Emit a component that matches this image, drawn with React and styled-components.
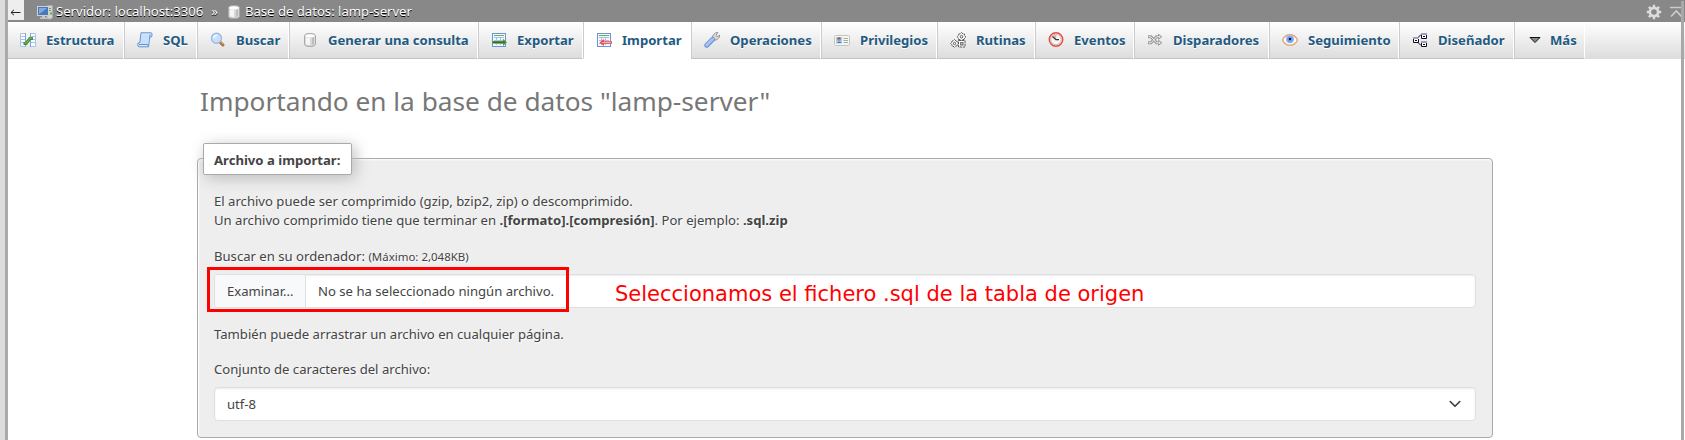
import React from "react";
import styled, { createGlobalStyle, css } from "styled-components";

const GlobalStyle = createGlobalStyle`
  * { box-sizing: border-box; }
  html, body { margin: 0; height: 100%; overflow: hidden; }
  body {
    background: #fff;
    color: #444;
    font-family: "Noto Sans", "Open Sans", sans-serif;
    font-size: 13.12px;
    line-height: 19.68px;
  }
`;

const Shell = styled.div`
  display: flex;
  width: 1685px;
  height: 440px;
  overflow: hidden;
`;

const NavigationEdge = styled.div`
  flex: none;
  width: 8px;
  background: #dcdddf;
  border-right: 3px solid #aaa;
`;

const Main = styled.main`
  flex: 1;
  min-width: 0;
`;

const ScrollBar = styled.div`
  position: absolute;
  top: 1px;
  left: 1681px;
  width: 3px;
  height: 439px;
  background: #a8a8a8;
`;

const ServerBar = styled.header`
  display: flex;
  align-items: center;
  height: 22px;
  background: #888;
  color: #fff;
  text-shadow: 0 1px 0 #000;
`;

const BackButton = styled.div`
  display: flex;
  align-items: center;
  align-self: flex-start;
  width: 16px;
  height: 20px;
  padding: 4px 0 0 2px;
  background: #eee;
`;

const Crumb = styled.span`
  display: flex;
  align-items: center;
  height: 22px;
  padding-top: 2px;
  margin-left: ${(p) => p.$gap}px;
  white-space: pre;
`;

const CrumbText = styled.span`
  padding-bottom: 1px;
  margin-left: ${(p) => p.$gap || 0}px;
`;

const BarTools = styled.div`
  display: flex;
  align-items: center;
  gap: 8px;
  margin: 1px 3px 0 auto;
`;

const TabBar = styled.nav`
  display: flex;
  height: 37px;
  background: linear-gradient(#fff, #dcdcdc);
`;

const Tab = styled.a`
  display: flex;
  flex: none;
  align-items: center;
  gap: ${(p) => p.$gap}px;
  width: ${(p) => p.$width}px;
  height: 37px;
  padding: 0 0 0 12px;
  border-left: 1px solid #ccc;
  border-right: 1px solid #fff;
  border-bottom: 1px solid #c4c4c4;
  color: #235a81;
  font-weight: 700;
  white-space: nowrap;
  text-shadow: 0 1px 0 #fff;

  &:first-child { border-left: 0; }

  ${(p) =>
    p.$active &&
    css`
      background: #fff;
      border-bottom-color: #fff;
    `}
`;

const TabText = styled.span`
  padding-top: 1px;
`;

const Content = styled.section`
  width: 1296px;
  margin-left: 189px;
`;

const Title = styled.h2`
  margin: 22px 0 0 3px;
  color: #777;
  font-size: 26.24px;
  font-weight: 400;
  line-height: 40px;
`;

const Panel = styled.div`
  height: 280px;
  margin-top: 37px;
  padding: 0 16px;
  background: #eee;
  border: 1px solid #aaa;
  border-radius: 4px;
  box-shadow: 1px 1px 2px #fff inset;
  text-shadow: 1px 1px 2px #fff;
`;

const Legend = styled.div`
  width: 149px;
  height: 32px;
  margin: -16px 0 16.8px -11px;
  padding: 7px 10px 5px;
  background: #fff;
  border: 1px solid #aaa;
  border-radius: 2px;
  box-shadow: 3px 3px 15px #bbb;
  font-weight: 700;
  line-height: 19px;
  white-space: nowrap;
`;

const Paragraph = styled.p`
  margin: 0 0 16px;
`;

const Label = styled.div`
  height: 19.68px;
  margin-bottom: 7.2px;

  small { font-size: 11.48px; }
`;

const Control = styled.div`
  display: flex;
  align-items: center;
  height: 33.68px;
  margin-bottom: ${(p) => p.$gap || 0}px;
  background: #fff;
  border: 1px solid #dcdfe4;
  border-radius: 4px;
  box-shadow: inset 0 1px 2px rgba(0, 0, 0, 0.075);
  text-shadow: none;
`;

const BrowseButton = styled.span`
  display: flex;
  align-items: center;
  width: 91px;
  height: 100%;
  padding: 1px 0 0 12px;
  background: #f8f9fa;
  border-right: 1px solid #dcdfe4;
  border-radius: 3px 0 0 3px;
`;

const FileName = styled.span`
  padding: 1px 0 0 12px;
`;

const SelectValue = styled.span`
  flex: 1;
  padding: 1px 0 0 12px;
`;

const Chevron = styled.svg`
  margin-right: 14px;
`;

const Highlight = styled.div`
  position: absolute;
  top: 267px;
  left: 207px;
  width: 362px;
  height: 45px;
  border: 3px solid #f00;
`;

const Note = styled.div`
  position: absolute;
  top: 281px;
  left: 615px;
  color: #f00;
  font: 21px/26px "DejaVu Sans", sans-serif;
  white-space: nowrap;
`;

const IconSvg = styled.svg`
  flex: none;
  width: 16px;
  height: 16px;
`;

const Icon = ({ children }) => (
  <IconSvg viewBox="0 0 16 16" fill="none">
    {children}
  </IconSvg>
);

const Cylinder = () => (
  <>
    <path d="M2.5 3.5Q2.5 1.5 8 1.5T13.5 3.5V12.5Q13.5 14.5 8 14.5T2.5 12.5Z" fill="#d9d9d9" stroke="#aaa" />
    <path d="M4 5.5V12Q6 13.2 8 13V6Z" fill="#f6f6f6" />
    <path d="M10 6V13L12 12V5Z" fill="#bdbdbd" />
    <ellipse cx="8" cy="3.8" rx="4.6" ry="1.6" fill="#fff" />
  </>
);

const Sheet = () => (
  <>
    <rect x="1.5" y="1.5" width="13" height="13" fill="#f4f8ff" stroke="#6c94d2" />
    <path d="M3 3.5H13" stroke="#76a95a" />
    <path d="M3 5.5H13M3 8.5H13M3 11.5H13M5.5 5V13M9.5 5V13" stroke="#a9bfe5" />
  </>
);

const icons = {
  server: (
    <>
      <path d="M9.5 2.5L11 1.5H15.5V13.5L14 15H10Z" fill="#d4d4cd" stroke="#aaa" />
      <path d="M11 4.5H14M11 6.5H14" stroke="#888" />
      <path d="M13 9.5H15" stroke="#4fc02c" strokeWidth="2" />
      <rect x=".5" y="2.5" width="11" height="9" fill="#4a78bd" stroke="#d2d2cd" />
      <path d="M2 4H10L6 7.5L2 10Z" fill="#82a9dc" />
      <path d="M5 12H8V13.5H10V15H3V13.5H5Z" fill="#c7c7bf" />
    </>
  ),
  structure: (
    <>
      <path d="M.5 1.5H5.5V14.5H.5ZM10.5 1.5H15.5V14.5H10.5Z" fill="#f8fbff" stroke="#a9c3e7" />
      <path d="M1 4.5H5M1 7.5H5M1 10.5H5M11 4.5H15M11 7.5H15M11 10.5H15" stroke="#a9c3e7" />
      <path d="M5.5 1V15M10.5 1V15" stroke="#87a4ce" />
      <path d="M3.5 11.5H6L10 6.5H13" stroke="#3f8c39" strokeWidth="3" />
      <path d="M4.5 11H6.5L10.3 6H12.5" stroke="#77c365" />
    </>
  ),
  sql: (
    <>
      <path d="M4 .8H14Q15.5 1 15 3L14.5 5H12.7L11.5 14.8H2Q.5 14.5 .8 12.5L1 11H2.8Z" fill="#dbeaff" stroke="#6190cf" />
      <path d="M4.5 2.5H12L11 12H3.8Z" fill="#c7dfff" />
      <path d="M2 12.5H10.5L11.5 14.5" stroke="#6190cf" />
      <path d="M12.7 4.5L13 2.5" stroke="#5585c8" />
    </>
  ),
  search: (
    <>
      <path d="M10 10L13 13" stroke="#a96d35" strokeWidth="3" strokeLinecap="round" />
      <path d="M10.5 9.8L13.4 12.6" stroke="#edb774" />
      <circle cx="6.5" cy="6.2" r="5" fill="#c9e0fa" stroke="#9ab9e2" strokeWidth="1.4" />
      <path d="M3.5 6Q4 3.5 7 3.2" stroke="#f5faff" strokeWidth="1.5" />
    </>
  ),
  database: <Cylinder />,
  export: (
    <>
      <Sheet />
      <path d="M1 9H12V6.8L16 10.3L12 14V11.5H1Z" fill="#4c9e35" />
      <path d="M2 10.3H14" stroke="#226b1c" />
    </>
  ),
  import: (
    <>
      <Sheet />
      <path d="M16 9.3H8V7L3.5 10.5L8 14V11.7H16Z" fill="#f04a4a" />
      <path d="M6 10.5H15" stroke="#ffaaa8" />
    </>
  ),
  wrench: (
    <>
      <path d="M9 7.5L8.5 4L11.5.7L14 .5L12 3.2L13 4.8L15.5 3V5L13 7.8L10 8.2Z" fill="#d8d8d8" stroke="#888" strokeWidth=".8" />
      <path d="M2.8 13.2L8.5 7.5" stroke="#6f93d2" strokeWidth="5" strokeLinecap="round" />
      <path d="M2.8 13L8.5 7.3" stroke="#a7c3f4" strokeWidth="3" strokeLinecap="round" />
    </>
  ),
  card: (
    <>
      <rect x=".5" y="3.5" width="15" height="10" rx="1" fill="#f6f6f3" stroke="#c5c5bf" />
      <rect x="2" y="5" width="6" height="6.5" fill="#a3ccf7" />
      <circle cx="5" cy="7.2" r="1.8" fill="#c18c62" />
      <path d="M3 11Q5 8.5 7.5 11" fill="#386fbd" />
      <path d="M3.5 6.2H6.5" stroke="#62462f" />
      <path d="M9.5 6.5H14M9.5 8.5H14M9.5 10.5H14" stroke="#aaa" />
    </>
  ),
  routines: (
    <>
      <path d="M11.5.5L13 2H14.5V3.5L15.8 5L14.5 6.3V7.5H12.8L11.5 8.7L10 7.5H8.5V6L7 4.8L8.5 3.3V2H10Z" fill="#fff" stroke="#555" strokeDasharray="2 .6" />
      <circle cx="11.5" cy="4.7" r="1.3" stroke="#555" />
      <path d="M4.5 7.5L6 9H7V10L8.4 11.5L7 12.8V14H5.8L4.4 15.4L3 14H2V12.7L.6 11.5L2 10V9H3Z" fill="#fff" stroke="#555" strokeDasharray="2 .6" />
      <circle cx="4.5" cy="11.5" r="1.2" stroke="#555" />
      <rect x="8.5" y="8.5" width="6.5" height="6.5" fill="#fff" stroke="#555" strokeDasharray="2.5 .7" />
      <rect x="10.7" y="10.7" width="2.3" height="2.3" stroke="#555" />
    </>
  ),
  clock: (
    <>
      <circle cx="8" cy="7.5" r="6.7" fill="#f5f5f1" stroke="#ed4848" strokeWidth="1.5" />
      <circle cx="8" cy="7.5" r="5.3" stroke="#bcbcb6" />
      <path d="M8 7.5L8.5 3H5Z" fill="#f4aaa5" />
      <path d="M4.5 4.5L8 7.7H11" stroke="#333" strokeWidth="1.3" />
    </>
  ),
  shuffle: (
    <>
      <path d="M1 4.8H4L9.5 10.8H12.5M1 10.8H4L9.5 4.8H12.5" stroke="#999" strokeWidth="3" />
      <path d="M11.5 2.3L14.8 4.8L11.5 7.3ZM11.5 8.3L14.8 10.8L11.5 13.3Z" fill="#d8d8d8" stroke="#999" />
      <path d="M1.8 4.8H4L9.5 10.8H13M1.8 10.8H4L9.5 4.8H13" stroke="#eee" />
    </>
  ),
  eye: (
    <>
      <path d="M.5 8Q3 2.7 8 2.7T15.5 8Q13 13.2 8 13.2T.5 8Z" fill="#fff" stroke="#e1aa80" strokeWidth="1.5" />
      <circle cx="8" cy="7.3" r="4" fill="#8fb2f0" />
      <circle cx="8" cy="7.3" r="2.5" fill="#6a92e2" />
      <rect x="7" y="6" width="2" height="2" fill="#101820" />
    </>
  ),
  designer: (
    <>
      <path d="M5.5 6L9 2.5M5.5 10L9 13.5" stroke="#111" />
      <path d="M1 6H6M9 2H15M9 10H15" stroke="#9c9cd2" strokeWidth="2" />
      <path d="M1.5 7V10.5H6.5V7M9.5 3V6.5H14.5V3M9.5 11V14.5H14.5V11" fill="#fff" stroke="#111" />
      <path d="M3 8.5H5M11 4.5H13M11 12.5H13" stroke="#111" />
    </>
  ),
  more: <path d="M3 5.5H13L8 10.5Z" fill="#888" stroke="#111" />,
  gear: (
    <>
      <path d="M8 .8V15.2M.8 8H15.2M2.9 2.9L13.1 13.1M13.1 2.9L2.9 13.1" stroke="#ddd" strokeWidth="2.4" />
      <circle cx="8" cy="8" r="4.1" fill="#888" stroke="#ddd" strokeWidth="2.6" />
    </>
  ),
};

const tabs = [
  ["structure", "Estructura", 116],
  ["sql", "SQL", 73],
  ["search", "Buscar", 92],
  ["database", "Generar una consulta", 189],
  ["export", "Exportar", 105],
  ["import", "Importar", 108],
  ["wrench", "Operaciones", 130],
  ["card", "Privilegios", 116],
  ["routines", "Rutinas", 98],
  ["clock", "Eventos", 99],
  ["shuffle", "Disparadores", 135],
  ["eye", "Seguimiento", 130],
  ["designer", "Diseñador", 115],
  ["more", "Más", 71],
];

export default function App() {
  return (
    <>
      <GlobalStyle />
      <Shell>
        <NavigationEdge />
        <Main>
          <ServerBar>
            <BackButton>
              <svg width="11" height="9" viewBox="0 0 11 9" fill="none">
                <path d="M10.5 4.5H1M4 1.8L1 4.5L4 7.2" stroke="#222" />
              </svg>
            </BackButton>
            <Crumb $gap={13}>
              <Icon>{icons.server}</Icon>
              <CrumbText $gap={3}>Servidor: localhost:3306</CrumbText>
            </Crumb>
            <Crumb $gap={8}>
              <CrumbText>»</CrumbText>
            </Crumb>
            <Crumb $gap={8}>
              <Icon>{icons.database}</Icon>
              <CrumbText $gap={3}>Base de datos: lamp-server</CrumbText>
            </Crumb>
            <BarTools>
              <Icon>{icons.gear}</Icon>
              <svg width="12" height="12" viewBox="0 0 12 12" fill="none">
                <path d="M0 1.5H12M1 10.5L6.3 5L11.5 10.5" stroke="#ccc" strokeWidth="1.7" />
              </svg>
            </BarTools>
          </ServerBar>
          <TabBar>
            {tabs.map(([icon, label, width]) => (
              <Tab key={icon} $width={width} $gap={icon === "more" ? 7 : 10} $active={icon === "import"}>
                <Icon>{icons[icon]}</Icon>
                <TabText>{label}</TabText>
              </Tab>
            ))}
          </TabBar>
          <Content>
            <Title>Importando en la base de datos "lamp-server"</Title>
            <Panel>
              <Legend>Archivo a importar:</Legend>
              <Paragraph>
                El archivo puede ser comprimido (gzip, bzip2, zip) o descomprimido.
                <br />
                Un archivo comprimido tiene que terminar en <b>.[formato].[compresión]</b>. Por ejemplo: <b>.sql.zip</b>
              </Paragraph>
              <Label>
                Buscar en su ordenador: <small>(Máximo: 2,048KB)</small>
              </Label>
              <Control $gap={16.8}>
                <BrowseButton>Examinar...</BrowseButton>
                <FileName>No se ha seleccionado ningún archivo.</FileName>
              </Control>
              <Paragraph>También puede arrastrar un archivo en cualquier página.</Paragraph>
              <Label>Conjunto de caracteres del archivo:</Label>
              <Control>
                <SelectValue>utf-8</SelectValue>
                <Chevron width="12" height="12" viewBox="0 0 12 12" fill="none">
                  <path d="M1.2 3.5L6 8.3L10.8 3.5" stroke="#343a40" strokeWidth="1.6" strokeLinecap="round" strokeLinejoin="round" />
                </Chevron>
              </Control>
            </Panel>
          </Content>
        </Main>
        <ScrollBar />
        <Highlight />
        <Note>Seleccionamos el fichero .sql de la tabla de origen</Note>
      </Shell>
    </>
  );
}
